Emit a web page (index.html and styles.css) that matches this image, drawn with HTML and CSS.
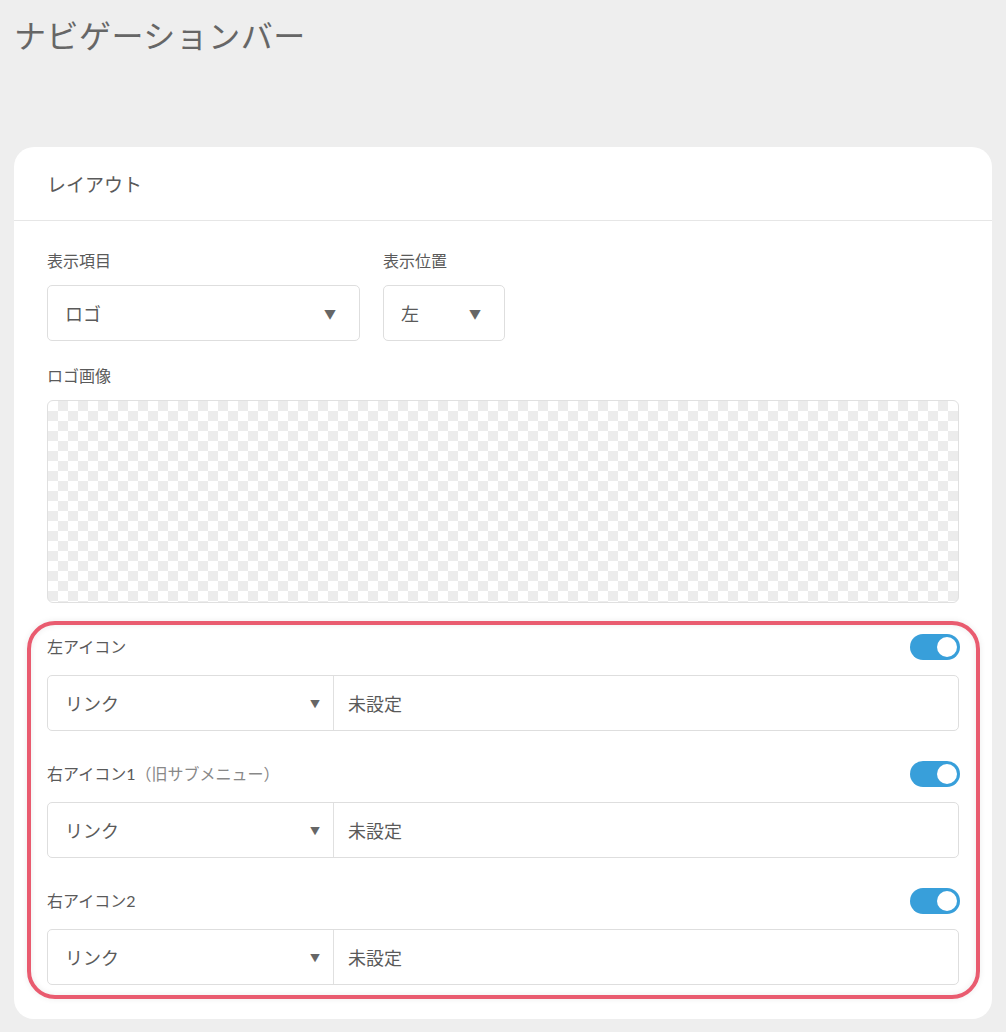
FILE: index.html
```html
<!DOCTYPE html>
<html lang="ja">
<head>
<meta charset="utf-8">
<link rel="stylesheet" href="styles.css">
</head>
<body>
<h1 class="page-title">ナビゲーションバー</h1>
<div class="card">
  <div class="card-header">レイアウト</div>
  <div class="card-body">
    <div class="field-row">
      <div class="field">
        <div class="label">表示項目</div>
        <div class="select select-wide"><span>ロゴ</span><span class="arrow">▼</span></div>
      </div>
      <div class="field">
        <div class="label">表示位置</div>
        <div class="select select-narrow"><span>左</span><span class="arrow">▼</span></div>
      </div>
    </div>
    <div class="label label-image">ロゴ画像</div>
    <div class="image-box"></div>

    <div class="icons">
      <div class="icon-row">
        <div class="icon-head">
          <span class="label">左アイコン</span>
          <span class="toggle"><span class="knob"></span></span>
        </div>
        <div class="input-group">
          <div class="ig-select"><span>リンク</span><span class="arrow-sm">▼</span></div>
          <div class="ig-text">未設定</div>
        </div>
      </div>
      <div class="icon-row">
        <div class="icon-head">
          <span class="label">右アイコン1<span class="sub">（旧サブメニュー）</span></span>
          <span class="toggle"><span class="knob"></span></span>
        </div>
        <div class="input-group">
          <div class="ig-select"><span>リンク</span><span class="arrow-sm">▼</span></div>
          <div class="ig-text">未設定</div>
        </div>
      </div>
      <div class="icon-row">
        <div class="icon-head">
          <span class="label">右アイコン2</span>
          <span class="toggle"><span class="knob"></span></span>
        </div>
        <div class="input-group">
          <div class="ig-select"><span>リンク</span><span class="arrow-sm">▼</span></div>
          <div class="ig-text">未設定</div>
        </div>
      </div>
    </div>
  </div>
</div>
</body>
</html>
```
FILE: styles.css
```css
* { box-sizing: border-box; }
body {
  margin: 0;
  background: #eeeeee;
  font-family: "Lato", "Noto Sans CJK JP", sans-serif;
  color: #5a5a5a;
}
.page-title {
  margin: 0;
  padding: 16px 14px 0;
  height: 147px;
  font-size: 32px;
  line-height: 40px;
  font-weight: 400;
  color: #666;
  letter-spacing: 0.5px;
}
.card {
  margin: 0 14px;
  background: #fff;
  border-radius: 20px;
  width: 978px;
}
.card-header {
  height: 74px;
  padding: 0 33px;
  display: flex;
  align-items: center;
  font-size: 19px;
  color: #5a5a5a;
  border-bottom: 1px solid #e6e6e6;
}
.card-body {
  padding: 30px 33px 34px;
}
.field-row {
  display: flex;
  gap: 23px;
}
.label {
  font-size: 16px;
  line-height: 20px;
  color: #5a5a5a;
}
.field .label { margin-bottom: 14px; }
.select {
  height: 56px;
  border: 1px solid #dedede;
  border-radius: 5px;
  display: flex;
  align-items: center;
  justify-content: space-between;
  padding: 0 23px 0 17px;
  font-size: 18px;
  color: #5a5a5a;
}
.select-wide { width: 313px; }
.select-narrow { width: 122px; }
.arrow { font-size: 12px; color: #666; }
.label-image { margin-top: 25px; margin-bottom: 14px; }
.image-box {
  height: 203px;
  border: 1px solid #e0e0e0;
  border-radius: 6px;
  background: repeating-conic-gradient(#ececec 0 25%, #ffffff 0 50%) 0 0 / 20px 20px;
}
.icons {
  position: relative;
  margin-top: 31px;
  display: flex;
  flex-direction: column;
  gap: 30px;
}
.icons::after {
  content: "";
  position: absolute;
  top: -13px;
  bottom: -14px;
  left: -20px;
  right: -21px;
  border: 4px solid #e95b6f;
  border-radius: 28px;
  box-shadow: 0 0 6px rgba(0,0,0,0.08), inset 0 0 6px rgba(0,0,0,0.08);
  pointer-events: none;
}
.icon-head {
  height: 26px;
  display: flex;
  align-items: center;
  justify-content: space-between;
  margin-bottom: 15px;
}
.sub { color: #888; }
.toggle {
  width: 50px;
  height: 26px;
  border-radius: 13px;
  background: #389fda;
  position: relative;
  display: block;
  margin-right: -1px;
}
.knob {
  position: absolute;
  right: 3px;
  top: 3px;
  width: 20px;
  height: 20px;
  border-radius: 50%;
  background: #fff;
}
.input-group {
  height: 56px;
  border: 1px solid #dedede;
  border-radius: 5px;
  display: flex;
  font-size: 18px;
  color: #5a5a5a;
}
.ig-select {
  width: 286px;
  border-right: 1px solid #e0e0e0;
  display: flex;
  align-items: center;
  justify-content: space-between;
  padding: 0 13px 0 17px;
}
.arrow-sm { font-size: 10px; color: #666; }
.ig-text {
  display: flex;
  align-items: center;
  padding-left: 14px;
}
```
